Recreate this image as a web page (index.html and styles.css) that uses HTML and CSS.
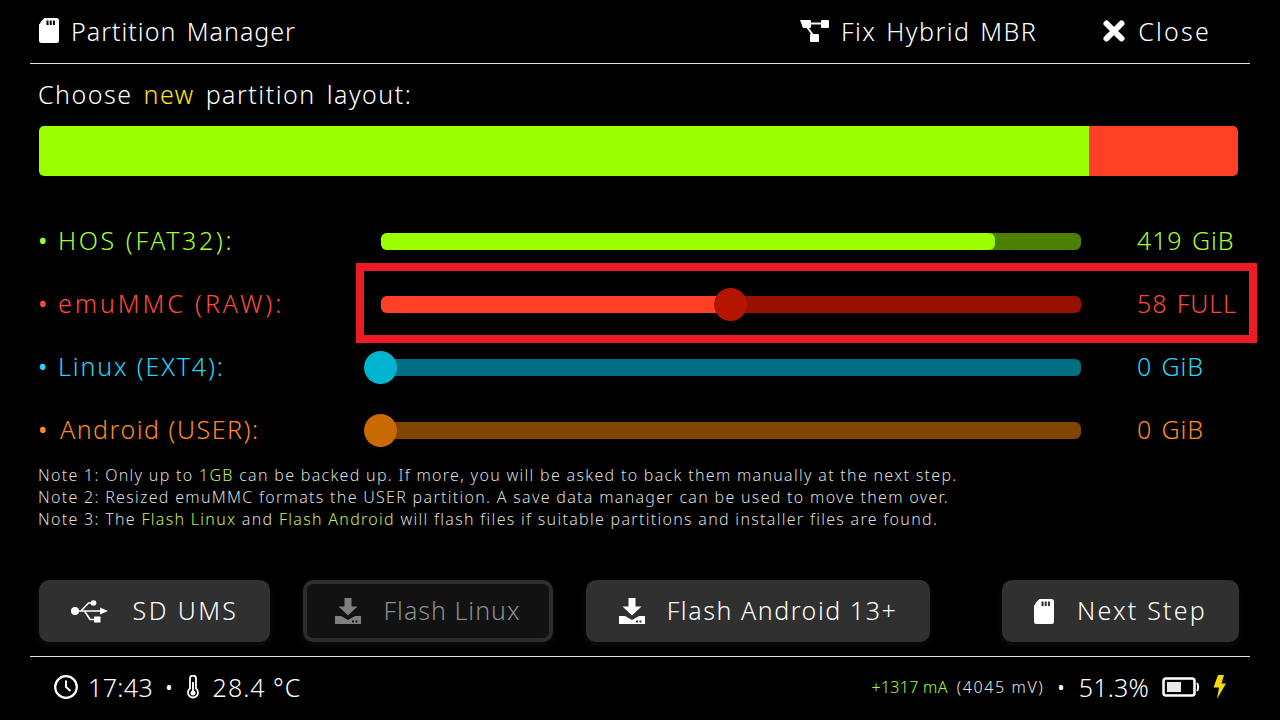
FILE: index.html
```html
<!DOCTYPE html>
<html lang="en">
<head>
  <meta charset="UTF-8" />
  <title>Partition Manager</title>
  <link rel="stylesheet" href="styles.css">
</head>
<body>
  <div class="screen">
    <header class="topbar">
      <div class="title">
        <svg class="icon" width="20" height="25" viewBox="0 0 20 25"><path fill="#fff" fill-rule="evenodd" d="M5.500 0H17.500a2.500 2.500 0 0 1 2.500 2.500v20a2.500 2.500 0 0 1-2.500 2.500H2.500a2.500 2.500 0 0 1-2.500-2.500V6.500L1.500 5V4zM7.500 2.500v4.500h2V2.500zM10.700 2.500v4.500h2V2.500zM13.900 2.500v4.500h2V2.500z"/></svg>
        <span>Partition Manager</span>
      </div>
      <div class="top-actions">
        <div class="top-btn fix">
          <svg class="icon" width="30" height="24" viewBox="0 0 30 24"><g fill="#fff"><path d="M1 1h10a1 1 0 0 1 1 1v6a1 1 0 0 1-1 1H4z"/><rect x="22" y="1" width="8" height="8" rx="1"/><rect x="11" y="15" width="9" height="8" rx="1"/></g><path d="M10 4.500h14M8 8l6 8" stroke="#fff" stroke-width="2" fill="none"/></svg>
          <span>Fix Hybrid MBR</span>
        </div>
        <div class="top-btn close">
          <svg class="icon" width="24" height="24" viewBox="0 0 24 24"><path d="M4.500 4.500l15 15M19.500 4.500l-15 15" stroke="#fff" stroke-width="6" stroke-linecap="round"/></svg>
          <span>Close</span>
        </div>
      </div>
    </header>

    <main class="content">
      <p class="choose">Choose <span class="yellow">new</span> partition layout:</p>
      <div class="layout-bar">
        <div class="seg-hos"></div>
        <div class="seg-emu"></div>
      </div>

      <div class="sliders">
        <div class="row hos">
          <div class="label"><span class="bullet">•</span><span>HOS (FAT32):</span></div>
          <div class="track"><div class="fill" style="width: 87.7%"></div></div>
          <div class="value">419 GiB</div>
        </div>
        <div class="row emu">
          <div class="label"><span class="bullet">•</span><span>emuMMC (RAW):</span></div>
          <div class="track"><div class="fill" style="width: 50%"></div><div class="knob" style="left: 50%"></div></div>
          <div class="value">58 FULL</div>
          <div class="highlight"></div>
        </div>
        <div class="row linux">
          <div class="label"><span class="bullet">•</span><span>Linux (EXT4):</span></div>
          <div class="track"><div class="knob" style="left: 0"></div></div>
          <div class="value">0 GiB</div>
        </div>
        <div class="row android">
          <div class="label"><span class="bullet">•</span><span>Android (USER):</span></div>
          <div class="track"><div class="knob" style="left: 0"></div></div>
          <div class="value">0 GiB</div>
        </div>
      </div>

      <div class="notes">
        <p>Note 1: Only up to <span class="lime">1GB</span> can be backed up. If more, you will be asked to back them manually at the next step.</p>
        <p>Note 2: Resized emuMMC formats the USER partition. A save data manager can be used to move them over.</p>
        <p>Note 3: The <span class="lime">Flash Linux</span> and <span class="lime">Flash Android</span> will flash files if suitable partitions and installer files are found.</p>
      </div>

      <div class="buttons">
        <div class="button ums">
          <svg class="icon" width="37" height="24" viewBox="0 0 37 24"><g fill="#fff" stroke="none"><circle cx="4" cy="12" r="4"/><circle cx="22.500" cy="4" r="2.800"/><rect x="23" y="17.500" width="6.500" height="6"/><path d="M29 8.500l8 3.500-8 3.500z"/></g><path d="M4 12h27M10 12l7.500-8h4M13.500 12l5.500 8.500h5" stroke="#fff" stroke-width="1.600" fill="none"/></svg>
          <span>SD UMS</span>
        </div>
        <div class="button linux-btn off">
          <svg class="icon" width="26" height="26" viewBox="0 0 26 26"><path fill="#808080" fill-rule="evenodd" d="M9.500 0h7v8.500h6L13 17.500 3.500 8.500h6zM0 18h6l7 4 7-4h6v8H0zM17 22.500v2h2v-2zM20.500 22.500v2h2v-2z"/></svg>
          <span>Flash Linux</span>
        </div>
        <div class="button android-btn">
          <svg class="icon" width="26" height="26" viewBox="0 0 26 26"><path fill="#fff" fill-rule="evenodd" d="M9.500 0h7v8.500h6L13 17.500 3.500 8.500h6zM0 18h6l7 4 7-4h6v8H0zM17 22.500v2h2v-2zM20.500 22.500v2h2v-2z"/></svg>
          <span>Flash Android 13+</span>
        </div>
        <div class="button next">
          <svg class="icon" width="20" height="25" viewBox="0 0 20 25"><path fill="#fff" fill-rule="evenodd" d="M5.500 0H17.500a2.500 2.500 0 0 1 2.500 2.500v20a2.500 2.500 0 0 1-2.500 2.500H2.500a2.500 2.500 0 0 1-2.500-2.500V6.500L1.500 5V4zM7.500 2.500v4.500h2V2.500zM10.700 2.500v4.500h2V2.500zM13.900 2.500v4.500h2V2.500z"/></svg>
          <span>Next Step</span>
        </div>
      </div>
    </main>

    <footer class="status">
      <div class="status-left">
        <svg class="icon" width="24" height="24" viewBox="0 0 24 24"><circle cx="12" cy="12" r="10.800" fill="none" stroke="#fff" stroke-width="2.200"/><path d="M12 5.500V12l4.500 4" stroke="#fff" stroke-width="2" fill="none"/></svg>
        <span class="time">17:43</span>
        <span class="dot">•</span>
        <svg class="icon thermo" width="12" height="24" viewBox="0 0 12 24"><path d="M3 13.500V3.500a3 3 0 0 1 6 0v10a5 5 0 1 1-6 0z" fill="none" stroke="#fff" stroke-width="1.800"/><path d="M6 7v10" stroke="#fff" stroke-width="2"/><circle cx="6" cy="18" r="2.500" fill="#fff"/></svg>
        <span class="temp">28.4 °C</span>
      </div>
      <div class="status-right">
        <span class="current">+1317 mA</span>
        <span class="volt">(4045 mV)</span>
        <span class="dot small">•</span>
        <span class="percent">51.3%</span>
        <svg class="icon" width="38" height="20" viewBox="0 0 38 20"><rect x="1.500" y="1.500" width="31" height="17" rx="2.500" fill="none" stroke="#fff" stroke-width="2.500"/><rect x="5" y="5" width="14" height="10" fill="#e8e8e8"/><path d="M35 6c1.500 2 1.500 6 0 8" fill="none" stroke="#fff" stroke-width="2"/></svg>
        <svg class="icon bolt" width="14" height="24" viewBox="0 0 14 24"><path fill="#f5d810" d="M6 0h6L9.500 8.500H14L5 24l2-11.500H1.500z"/></svg>
      </div>
    </footer>
  </div>
</body>
</html>
```

FILE: styles.css
```css
* {
  box-sizing: border-box;
}
html, body {
  margin: 0;
  background: #000;
}
body {
  font-family: "Noto Sans", sans-serif;
  font-weight: 300;
  color: #fff;
  overflow: hidden;
}
p {
  margin: 0;
}
.icon {
  display: block;
  flex: none;
}
.screen {
  width: 1280px;
  height: 720px;
  padding: 0 30px;
  display: flex;
  flex-direction: column;
}

/* top bar */
.topbar {
  height: 64px;
  padding-bottom: 2px;
  border-bottom: 1px solid #e0e0e0;
  display: flex;
  align-items: center;
  justify-content: space-between;
  font-size: 25px;
}
.title {
  display: flex;
  align-items: center;
  gap: 12px;
  padding-left: 9px;
  letter-spacing: 1px;
  word-spacing: 3px;
}
.top-actions {
  display: flex;
  align-items: center;
}
.top-btn {
  display: flex;
  align-items: center;
  gap: 12px;
}
.fix {
  letter-spacing: 1.45px;
  word-spacing: 2px;
  margin-right: 65px;
}
.close {
  letter-spacing: 2.2px;
  margin-right: 39px;
}

/* main */
.content {
  flex: 1;
  padding: 0 11px 0 8px;
  display: flex;
  flex-direction: column;
}
.choose {
  margin-top: 12px;
  margin-bottom: 1px;
  font-size: 25px;
  line-height: 36px;
  letter-spacing: 1.5px;
  word-spacing: 3px;
}
.yellow {
  color: #ffe422;
}
.layout-bar {
  display: flex;
  height: 50px;
  width: 1199px;
  margin: 13px 0 0 1px;
  border-radius: 5px;
  overflow: hidden;
}
.seg-hos {
  width: 1050px;
  background: #9bff00;
}
.seg-emu {
  flex: 1;
  background: #ff4027;
}

/* sliders */
.sliders {
  margin-top: 34px;
}
.row {
  position: relative;
  display: flex;
  align-items: center;
  height: 63px;
  font-size: 25px;
}
.label {
  width: 343px;
  display: flex;
  margin-bottom: 4px;
}
.bullet {
  width: 20px;
  flex: none;
  font-weight: 400;
}
.track {
  position: relative;
  width: 700px;
  height: 17px;
  border-radius: 6px;
}
.fill {
  height: 100%;
  border-radius: 6px;
}
.knob {
  position: absolute;
  top: -8px;
  width: 33px;
  height: 33px;
  margin-left: -17px;
  border-radius: 50%;
}
.value {
  margin-left: 56px;
  margin-bottom: 4px;
  white-space: nowrap;
  letter-spacing: 0.9px;
  word-spacing: 2px;
}
.highlight {
  position: absolute;
  left: 318px;
  top: -10px;
  width: 901px;
  height: 80px;
  border: 8px solid #ed1c24;
}
.hos { color: #a0ff30; }
.hos .label { letter-spacing: 2.6px; }
.hos .track { background: #4d8000; }
.hos .fill { background: #9bff00; }
.emu { color: #ff4a38; }
.emu .label { letter-spacing: 2.9px; }
.emu .track { background: #981000; }
.emu .fill { background: #ff4027; }
.emu .knob { background: #b51400; }
.linux { color: #28d4f8; }
.linux .label { letter-spacing: 1.85px; }
.linux .track { background: #006f85; }
.linux .knob { background: #00b4d0; }
.android { color: #ff8a20; }
.android .label { letter-spacing: 1.5px; }
.android .bullet { width: 22px; }
.android .track { background: #804500; }
.android .knob { background: #c96a00; }

/* notes */
.notes {
  margin-top: 2px;
  font-size: 16px;
  line-height: 22px;
  letter-spacing: 1.3px;
  color: #dcdcdc;
}
.lime {
  color: #c8ee50;
}

/* buttons */
.buttons {
  display: flex;
  margin-top: 50px;
  padding-left: 1px;
}
.button {
  height: 62px;
  background: #303030;
  border-radius: 10px;
  box-shadow: 0 4px 6px rgba(40, 40, 40, 0.35);
  display: flex;
  align-items: center;
  justify-content: center;
  gap: 22px;
  font-size: 25px;
}
.button span {
  margin-bottom: 3px;
}
.ums {
  width: 231px;
  margin-right: 33px;
  gap: 25px;
  letter-spacing: 2.4px;
}
.linux-btn {
  width: 250px;
  margin-right: 33px;
  letter-spacing: 1px;
}
.android-btn {
  width: 344px;
  margin-right: 72px;
  letter-spacing: 1.55px;
}
.next {
  width: 237px;
  gap: 23px;
  letter-spacing: 2.2px;
}
.off {
  background: #121212;
  border: 4px solid #2c2c2c;
  color: #8c8c8c;
}

/* status bar */
.status {
  height: 64px;
  border-top: 1px solid #e0e0e0;
  display: flex;
  align-items: center;
  justify-content: space-between;
  padding: 0 24px 4px 24px;
}
.status-left {
  display: flex;
  align-items: center;
  gap: 10px;
  font-size: 25px;
}
.time {
  letter-spacing: 0.4px;
}
.status-left .dot {
  margin-left: 1px;
}
.thermo {
  margin-left: 3px;
}
.temp {
  margin-left: 4px;
  letter-spacing: 1px;
}
.status-right {
  display: flex;
  align-items: center;
  font-size: 16px;
}
.current {
  color: #a0ff30;
  letter-spacing: 0.3px;
}
.volt {
  margin-left: 9px;
  color: #e8e8e8;
  letter-spacing: 1.6px;
}
.dot {
  font-size: 25px;
}
.dot.small {
  margin: 0 13px 0 12px;
}
.percent {
  font-size: 25px;
  letter-spacing: 0.2px;
  margin-right: 13px;
}
.bolt {
  margin-left: 12px;
}
```
